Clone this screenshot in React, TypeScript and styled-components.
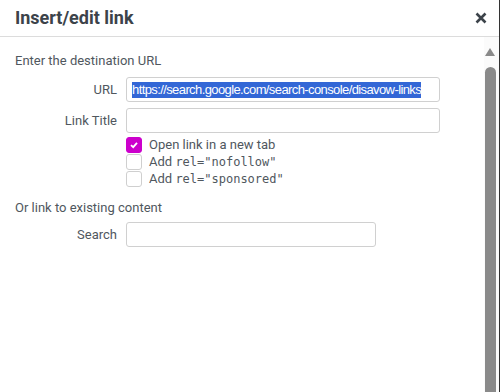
import React from "react";
import styled, { createGlobalStyle } from "styled-components";

const Global = createGlobalStyle`
  html, body { margin: 0; padding: 0; background: #fff; }
  body { font-family: Roboto, "Liberation Sans", Arial, sans-serif; }
  * { box-sizing: border-box; }
`;

const Dialog = styled.div`
  width: 500px;
  height: 392px;
  display: flex;
  flex-direction: column;
  border-right: 1px solid #333;
  background: #fff;
  overflow: hidden;
`;

const Header = styled.div`
  height: 37px;
  flex: none;
  display: flex;
  align-items: center;
  justify-content: space-between;
  padding: 0 12px 0 15px;
  border-bottom: 1px solid #dcdcdc;
`;

const Title = styled.h1`
  margin: 0;
  font-size: 18px;
  font-weight: 700;
  color: #3c434a;
  line-height: 36px;
`;

const Close = styled.button`
  border: 0;
  background: none;
  padding: 0;
  width: 12px;
  height: 12px;
  display: flex;
  cursor: pointer;
`;

const Body = styled.div`
  flex: 1;
  display: flex;
  min-height: 0;
`;

const Content = styled.div`
  flex: 1;
  padding: 15px 0 0 15px;
  color: #50575e;
  font-size: 13px;
`;

const Section = styled.p<{ $mb: number }>`
  margin: 0 0 ${(p) => p.$mb}px;
  line-height: 18px;
`;

const Row = styled.div`
  display: flex;
  align-items: center;
  margin-bottom: 6px;
`;

const Label = styled.label`
  width: 111px;
  text-align: right;
  padding-right: 9px;
  line-height: 18px;
`;

const Field = styled.div<{ $w: number }>`
  width: ${(p) => p.$w}px;
  height: 25px;
  border: 1px solid #d0d0d0;
  border-radius: 3px;
  background: #fff;
  display: flex;
  align-items: center;
  padding: 0 5px;
  white-space: nowrap;
  overflow: hidden;
`;

const Selected = styled.span`
  background: #3367d6;
  color: #fff;
  font-family: "Liberation Sans", Arial, sans-serif;
  font-size: 13px;
  line-height: 16px;
  letter-spacing: -0.6px;
`;

const Checks = styled.div`
  margin-left: 111px;
  margin-top: -3px;
  display: flex;
  flex-direction: column;
`;

const CheckRow = styled.div`
  display: flex;
  align-items: center;
  height: 17px;
`;

const Box = styled.span<{ $on?: boolean }>`
  width: 16px;
  height: 16px;
  border-radius: 3px;
  flex: none;
  display: flex;
  align-items: center;
  justify-content: center;
  background: ${(p) => (p.$on ? "#cc00cc" : "#fff")};
  border: 1px solid ${(p) => (p.$on ? "#cc00cc" : "#cfcfcf")};
  margin-right: 7px;
`;

const Code = styled.code`
  font-family: "DejaVu Sans Mono", "Liberation Mono", monospace;
  font-size: 12px;
`;

const Spacer = styled.div`
  height: 12px;
`;

const Scrollbar = styled.div`
  width: 15px;
  flex: none;
  background: #fbfbfb;
  display: flex;
  flex-direction: column;
  align-items: flex-start;
  padding-left: 1px;
  padding-top: 11px;
`;

const Arrow = styled.div`
  width: 0;
  height: 0;
  border-left: 5.5px solid transparent;
  border-right: 5.5px solid transparent;
  border-bottom: 8px solid #8a8a8a;
`;

const Thumb = styled.div`
  margin-top: 11px;
  width: 11px;
  flex: 1;
  background: #8a8a8a;
  border-radius: 6px 6px 0 0;
`;

export default function App() {
  return (
    <>
      <Global />
      <Dialog>
        <Header>
          <Title>Insert/edit link</Title>
          <Close aria-label="Close">
            <svg width="12" height="12" viewBox="0 0 12 12">
              <path d="M1.5 1.5 L10.5 10.5 M10.5 1.5 L1.5 10.5" stroke="#3c434a" strokeWidth="2.6" strokeLinecap="butt" />
            </svg>
          </Close>
        </Header>
        <Body>
          <Content>
            <Section $mb={7}>Enter the destination URL</Section>
            <Row>
              <Label>URL</Label>
              <Field $w={314}>
                <Selected>https://search.google.com/search-console/disavow-links</Selected>
              </Field>
            </Row>
            <Row>
              <Label>Link Title</Label>
              <Field $w={314} />
            </Row>
            <Checks>
              <CheckRow>
                <Box $on>
                  <svg width="10" height="10" viewBox="0 0 10 10">
                    <path d="M2 5.2 L4.2 7.2 L8 2.8" stroke="#fff" strokeWidth="1.8" fill="none" />
                  </svg>
                </Box>
                Open link in a new tab
              </CheckRow>
              <CheckRow>
                <Box />
                Add&nbsp;<Code>rel="nofollow"</Code>
              </CheckRow>
              <CheckRow>
                <Box />
                Add&nbsp;<Code>rel="sponsored"</Code>
              </CheckRow>
            </Checks>
            <Spacer />
            <Section $mb={5}>Or link to existing content</Section>
            <Row>
              <Label>Search</Label>
              <Field $w={250} />
            </Row>
          </Content>
          <Scrollbar>
            <Arrow />
            <Thumb />
          </Scrollbar>
        </Body>
      </Dialog>
    </>
  );
}
